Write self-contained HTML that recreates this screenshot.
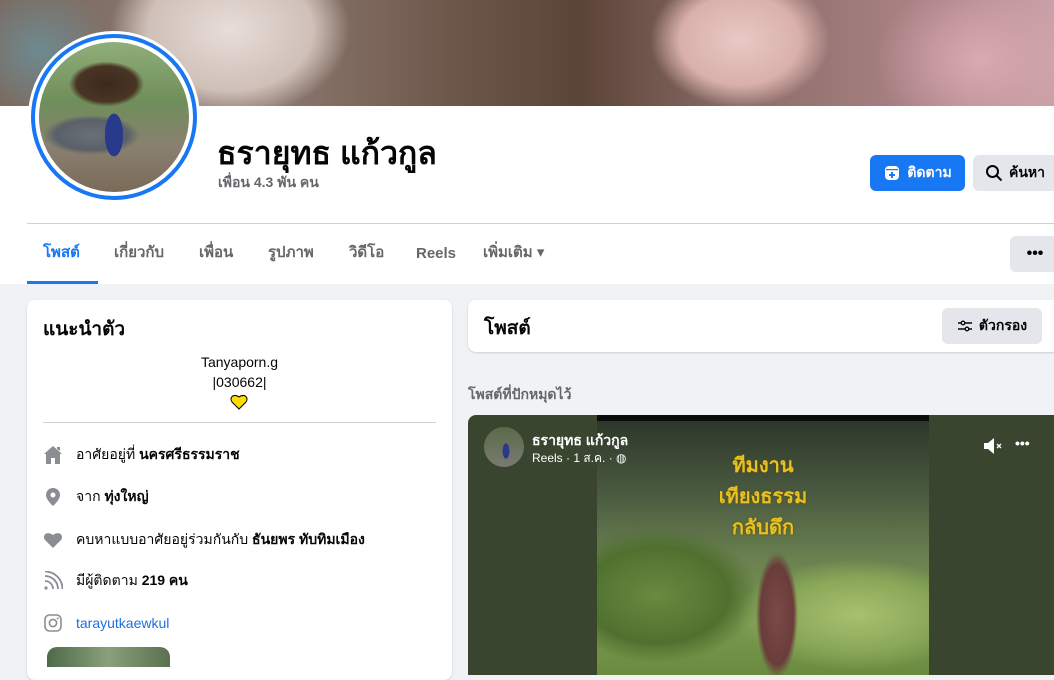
<!DOCTYPE html>
<html><head><meta charset="utf-8"><style>
*{margin:0;padding:0;box-sizing:border-box}
body{width:1054px;height:657px;overflow:hidden;background:#f0f2f5;font-family:"Liberation Sans","DejaVu Sans",sans-serif;color:#050505;position:relative}
.abs{position:absolute}
#cover{left:0;top:0;width:1054px;height:106px;background:
radial-gradient(ellipse 120px 90px at 740px 40px,#e8c9c4 0%,#d9b0ab 50%,transparent 75%),
radial-gradient(ellipse 150px 110px at 230px 30px,#e8ddd8 0%,#cfc0b8 55%,transparent 80%),
radial-gradient(ellipse 90px 80px at 40px 50px,#6e8a90 0%,transparent 80%),
radial-gradient(ellipse 130px 100px at 980px 60px,#d9aab0 0%,transparent 80%),
linear-gradient(90deg,#7a6a60 0%,#8d7a70 25%,#6a5347 45%,#5b4438 55%,#8a6c68 70%,#b0868a 90%,#c9a0a8 100%)}
#head{left:0;top:106px;width:1054px;height:178px;background:#fff}
#avatar{left:28px;top:31px;width:172px;height:172px;border-radius:50%;background:#fff;padding:3px}
#avatar .ring{width:100%;height:100%;border-radius:50%;border:4px solid #1877f2;padding:4px;background:#fff}
#avatar .img{width:100%;height:100%;border-radius:50%;background:
radial-gradient(ellipse 15px 35px at 50% 62%,#2a3a8a 0%,#2a3a8a 60%,transparent 62%),
radial-gradient(ellipse 50px 30px at 45% 28%,#3a2a1e 0%,#4a3524 60%,transparent 75%),
radial-gradient(ellipse 60px 25px at 35% 62%,#6a7078 0%,#5a6068 60%,transparent 80%),
linear-gradient(180deg,#8fae7a 0%,#6f8e5a 40%,#8a8070 70%,#7a6a58 100%);overflow:hidden}
.name{left:217px;top:128px;font-size:32px;font-weight:bold}
.friends{left:218px;top:172px;font-size:14px;color:#65676b;font-weight:bold}
.btn{height:36px;border-radius:6px;font-size:14px;font-weight:bold;display:flex;align-items:center;justify-content:center;gap:6px}
.divider{left:27px;top:223px;width:1027px;height:1px;background:#ced0d4}
.tabs{left:27px;top:234px;height:40px;display:flex;align-items:center}
.tab{font-size:15px;color:#65676b;font-weight:bold;line-height:40px;height:40px;display:flex;align-items:center}
.card{background:#fff;border-radius:8px;box-shadow:0 1px 2px rgba(0,0,0,.15)}
.row{left:43px;font-size:14px;color:#050505;display:flex;align-items:center;gap:13px}
.row svg{flex:none}
</style></head><body>
<div id="cover" class="abs"></div>
<div id="head" class="abs"></div>
<div id="avatar" class="abs"><div class="ring"><div class="img"></div></div></div>
<div class="abs name">ธรายุทธ แก้วกูล</div>
<div class="abs friends">เพื่อน 4.3 พัน คน</div>
<div class="abs btn" style="left:870px;top:155px;width:95px;background:#1877f2;color:#fff">
<svg width="18" height="18" viewBox="0 0 18 18"><rect x="2" y="2" width="14" height="14" rx="4" fill="#fff"/><rect x="3" y="5" width="12" height="1.2" fill="#1877f2"/><path d="M9 8v6M6 11h6" stroke="#1877f2" stroke-width="2"/></svg>ติดตาม</div>
<div class="abs btn" style="left:973px;top:155px;width:90px;background:#e4e6eb;justify-content:flex-start;padding-left:12px">
<svg width="18" height="18" viewBox="0 0 18 18"><circle cx="7.5" cy="7.5" r="5.5" fill="none" stroke="#050505" stroke-width="2"/><path d="M11.5 11.5l5 5" stroke="#050505" stroke-width="2"/></svg>ค้นหา</div>
<div class="abs divider"></div>
<div class="abs tab" style="left:43px;top:233px;color:#1877f2">โพสต์</div>
<div class="abs" style="left:27px;top:281px;width:71px;height:3px;background:#1877f2"></div>
<div class="abs tab" style="left:114px;top:233px">เกี่ยวกับ</div>
<div class="abs tab" style="left:199px;top:233px">เพื่อน</div>
<div class="abs tab" style="left:268px;top:233px">รูปภาพ</div>
<div class="abs tab" style="left:349px;top:233px">วิดีโอ</div>
<div class="abs tab" style="left:416px;top:234px">Reels</div>
<div class="abs tab" style="left:483px;top:233px">เพิ่มเติม ▾</div>
<div class="abs btn" style="left:1010px;top:236px;width:50px;background:#e4e6eb;font-size:16px">•••</div>

<div class="abs card" style="left:27px;top:300px;width:425px;height:380px"></div>
<div class="abs" style="left:43px;top:314px;font-size:19px;font-weight:bold">แนะนำตัว</div>
<div class="abs" style="left:27px;top:352px;width:425px;text-align:center;font-size:14px;line-height:20px">Tanyaporn.g<br>|030662|</div>
<svg class="abs" style="left:230px;top:394px" width="18" height="16" viewBox="0 0 18 16"><path d="M9 15L2 8C-1 4 3 -1 9 3C15 -1 19 4 16 8Z" fill="#ffdd00" stroke="#000" stroke-width="1"/></svg>
<div class="abs" style="left:43px;top:422px;width:393px;height:1px;background:#ced0d4"></div>
<div class="abs row" style="top:444px"><svg width="20" height="20" viewBox="0 0 20 20"><path d="M10 1L1 9h2v10h5v-6h4v6h5V9h2z M14 2h3v4l-3-2z" fill="#8a8d91"/></svg><span>อาศัยอยู่ที่ <b>นครศรีธรรมราช</b></span></div>
<div class="abs row" style="top:486px"><svg width="20" height="20" viewBox="0 0 20 20"><path d="M10 1a7 7 0 0 0-7 7c0 5 7 11 7 11s7-6 7-11a7 7 0 0 0-7-7z" fill="#8a8d91"/><circle cx="10" cy="8" r="2.5" fill="#fff"/></svg><span>จาก <b>ทุ่งใหญ่</b></span></div>
<div class="abs row" style="top:529px"><svg width="20" height="20" viewBox="0 0 20 20"><path d="M10 18L2 10C-1 6 3 0 10 5C17 0 21 6 18 10Z" fill="#8a8d91"/></svg><span>คบหาแบบอาศัยอยู่ร่วมกันกับ <b>ธันยพร ทับทิมเมือง</b></span></div>
<div class="abs row" style="top:570px"><svg width="20" height="20" viewBox="0 0 20 20"><circle cx="3" cy="17" r="1.6" fill="#8a8d91"/><path d="M2 10a8 8 0 0 1 8 8M2 5a13 13 0 0 1 13 13M2 0.5a17.5 17.5 0 0 1 17.5 17.5" fill="none" stroke="#8a8d91" stroke-width="1.8"/></svg><span>มีผู้ติดตาม <b>219 คน</b></span></div>
<div class="abs row" style="top:613px"><svg width="20" height="20" viewBox="0 0 20 20"><rect x="2" y="2" width="16" height="16" rx="4.5" fill="none" stroke="#8a8d91" stroke-width="1.6"/><circle cx="10" cy="10" r="3.6" fill="none" stroke="#8a8d91" stroke-width="1.6"/><circle cx="14.6" cy="5.4" r="1" fill="#8a8d91"/></svg><span style="color:#216fdb">tarayutkaewkul</span></div>
<div class="abs" style="left:47px;top:647px;width:123px;height:20px;border-radius:10px 10px 0 0;background:linear-gradient(90deg,#4d6a4a,#8aa07a,#5a7050)"></div>

<div class="abs card" style="left:468px;top:300px;width:600px;height:52px"></div>
<div class="abs" style="left:484px;top:313px;font-size:19px;font-weight:bold">โพสต์</div>
<div class="abs btn" style="left:942px;top:308px;width:100px;background:#e4e6eb;font-size:14px">
<svg width="16" height="14" viewBox="0 0 16 14"><path d="M1 4h3M8 4h7M1 10h7M12 10h3" stroke="#050505" stroke-width="1.4"/><circle cx="6" cy="4" r="1.8" fill="none" stroke="#050505" stroke-width="1.3"/><circle cx="10" cy="10" r="1.8" fill="none" stroke="#050505" stroke-width="1.3"/></svg>ตัวกรอง</div>
<div class="abs" style="left:468px;top:384px;font-size:14px;color:#65676b;font-weight:bold">โพสต์ที่ปักหมุดไว้</div>

<div class="abs" style="left:468px;top:415px;width:600px;height:260px;background:#3a4530;border-radius:8px 0 0 0;overflow:hidden">
<div class="abs" style="left:129px;top:0;width:332px;height:260px;background:
radial-gradient(ellipse 30px 90px at 180px 200px,#7a4a48 0%,#6a3c3a 55%,transparent 70%),
radial-gradient(ellipse 150px 70px at 260px 200px,#a8c070 0%,#8aa858 50%,transparent 80%),
radial-gradient(ellipse 120px 80px at 60px 180px,#6a8a40 0%,#50702f 60%,transparent 85%),
linear-gradient(180deg,#2a3528 0%,#4a5a40 30%,#6a8050 55%,#7a9a50 80%,#6a8a40 100%)">
<div style="height:6px;background:#0b0b0b"></div>
<div style="position:absolute;left:0;width:332px;top:36px;text-align:center;color:#e8c020;font-weight:bold;font-size:20px;line-height:31px;text-shadow:0 0 2px #5a4a10">ทีมงาน<br>เทียงธรรม<br>กลับดึก</div>
</div>
<div class="abs" style="left:16px;top:12px;width:40px;height:40px;border-radius:50%;background:radial-gradient(ellipse 4px 9px at 55% 60%,#2a3a8a 0 80%,transparent 90%),linear-gradient(#5a6a4a,#7a7a70)"></div>
<div class="abs" style="left:64px;top:15px;color:#fff;font-size:14px;font-weight:bold">ธรายุทธ แก้วกูล</div>
<div class="abs" style="left:64px;top:34px;color:#fff;font-size:12px">Reels · 1 ส.ค. · ◍</div>
<svg class="abs" style="left:514px;top:21px" width="22" height="20" viewBox="0 0 22 20"><path d="M2 7h4l6-5v16l-6-5H2z" fill="#fff"/><path d="M15 8l4 4M19 8l-4 4" stroke="#fff" stroke-width="1.3"/></svg>
<div class="abs" style="left:547px;top:20px;color:#fff;font-size:14px;font-weight:bold">•••</div>
</div>
</body></html>
